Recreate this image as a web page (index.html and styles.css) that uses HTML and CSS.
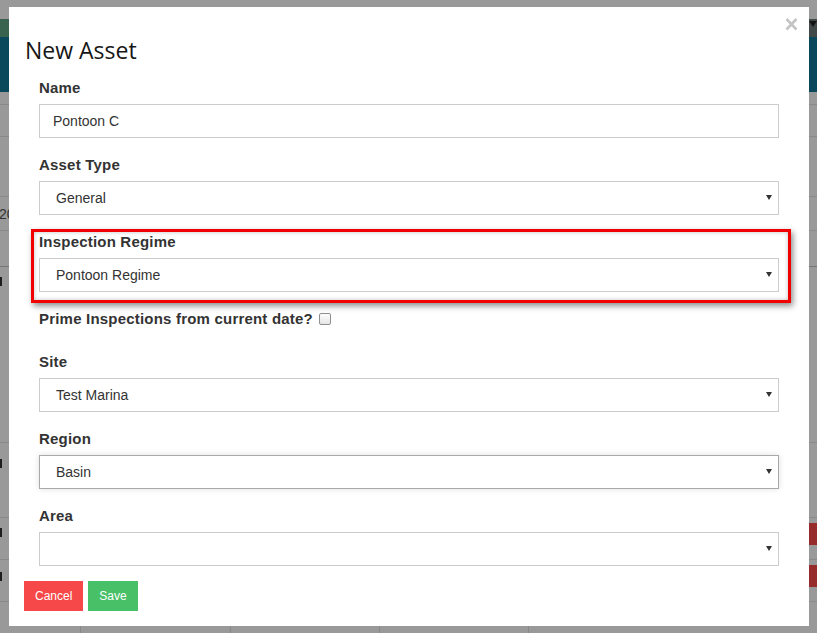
FILE: index.html
```html
<!DOCTYPE html>
<html>
<head>
<meta charset="utf-8">
<title>New Asset</title>
<link rel="stylesheet" href="styles.css">
</head>
<body>
<div class="page">
  <div class="topbar"><span class="brand"></span><span class="topfill"></span><span class="caret"></span></div>
  <div class="mainbar"></div>
  <div class="grid">
    <div class="row h13"><span class="cell c1"></span><span class="cell c2"></span><span class="cell c3"></span><span class="cell c4"></span><span class="cell c5"></span></div>
    <div class="row h32"><span class="cell c1"></span><span class="cell c2"></span><span class="cell c3"></span><span class="cell c4"></span><span class="cell c5"></span></div>
    <div class="row h60"><span class="cell c1"></span><span class="cell c2"></span><span class="cell c3"></span><span class="cell c4"></span><span class="cell c5"></span></div>
    <div class="row h34"><span class="cell c1"><span class="celltext">20</span></span><span class="cell c2"></span><span class="cell c3"></span><span class="cell c4"></span><span class="cell c5"></span></div>
    <div class="row h36 dark"><span class="cell c1"></span><span class="cell c2"></span><span class="cell c3"></span><span class="cell c4"></span><span class="cell c5"></span></div>
    <div class="row h176"><span class="cell c1 top"><span class="tick t1"></span></span><span class="cell c2"></span><span class="cell c3"></span><span class="cell c4"></span><span class="cell c5"></span></div>
    <div class="row h75"><span class="cell c1 top"><span class="tick t2"></span></span><span class="cell c2"></span><span class="cell c3"></span><span class="cell c4"></span><span class="cell c5"></span></div>
    <div class="row h42"><span class="cell c1 top"><span class="tick t3"></span></span><span class="cell c2"></span><span class="cell c3"></span><span class="cell c4"></span><span class="cell c5 end"><span class="redbtn"></span></span></div>
    <div class="row h42"><span class="cell c1 top"><span class="tick t4"></span></span><span class="cell c2"></span><span class="cell c3"></span><span class="cell c4"></span><span class="cell c5 end"><span class="redbtn"></span></span></div>
    <div class="row h60"><span class="cell c1"></span><span class="cell c2"></span><span class="cell c3"></span><span class="cell c4"></span><span class="cell c5"></span></div>
  </div>
</div>

<div class="backdrop">
  <div class="modal">
    <button class="close" type="button" aria-label="Close">
      <svg width="13" height="14" viewBox="0 0 13 14"><path d="M1.5 2 L11.5 12.5 M11.5 2 L1.5 12.5" stroke="#c4c4c4" stroke-width="2.6" fill="none"/></svg>
    </button>
    <h4 class="modal-title">New Asset</h4>
    <form class="modal-body">
      <div class="form-group">
        <label class="control-label">Name</label>
        <input class="form-control" type="text" value="Pontoon C">
      </div>
      <div class="form-group">
        <label class="control-label">Asset Type</label>
        <div class="select-wrap">
          <select class="form-control select"><option>General</option></select>
        </div>
      </div>
      <div class="form-group highlighted">
        <label class="control-label">Inspection Regime</label>
        <div class="select-wrap">
          <select class="form-control select"><option>Pontoon Regime</option></select>
        </div>
        <span class="annotation"></span>
      </div>
      <div class="form-group check-group">
        <label class="control-label">Prime Inspections from current date? <input class="checkbox" type="checkbox"></label>
      </div>
      <div class="form-group">
        <label class="control-label">Site</label>
        <div class="select-wrap">
          <select class="form-control select"><option>Test Marina</option></select>
        </div>
      </div>
      <div class="form-group">
        <label class="control-label">Region</label>
        <div class="select-wrap">
          <select class="form-control select focused"><option>Basin</option></select>
        </div>
      </div>
      <div class="form-group last">
        <label class="control-label">Area</label>
        <div class="select-wrap">
          <select class="form-control select"><option></option></select>
        </div>
      </div>
    </form>
    <div class="modal-footer">
      <button class="btn btn-cancel" type="button">Cancel</button>
      <button class="btn btn-save" type="button">Save</button>
    </div>
  </div>
</div>
</body>
</html>
```

FILE: styles.css
```css
* { box-sizing: border-box; }

html, body {
  margin: 0;
  padding: 0;
  height: 100%;
  overflow: hidden;
  background: #fff;
  font-family: "Liberation Sans", Arial, sans-serif;
}

/* ---------- background page (under the backdrop) ---------- */
.page {
  padding-top: 19px;
}
.topbar {
  display: flex;
  height: 18px;
  align-items: center;
}
.brand {
  width: 60px;
  height: 18px;
  background: #5fa584;
}
.topfill {
  flex: 1;
  height: 18px;
  background: linear-gradient(90deg, #5fa584 0%, #5fa584 85%, #6f7a7a 100%);
}
.caret {
  position: absolute;
  right: 0;
  top: 21px;
  width: 0;
  height: 0;
  border-left: 4px solid transparent;
  border-right: 4px solid transparent;
  border-top: 6px solid #222;
}
.mainbar {
  height: 55px;
  background: #127a9a;
}
.grid {
  display: flex;
  flex-direction: column;
}
.row {
  display: flex;
  border-bottom: 1px solid #e4e4e4;
}
.row.dark { border-bottom-color: #c4c4c4; }
.h13 { height: 13px; }
.h32 { height: 32px; }
.h34 { height: 34px; }
.h36 { height: 36px; }
.h42 { height: 42px; }
.h60 { height: 60px; }
.h75 { height: 75px; }
.h176 { height: 176px; }
.cell {
  display: flex;
  align-items: center;
  border-right: 1px solid #e4e4e4;
  overflow: hidden;
}
.cell.top { align-items: flex-start; }
.c1 { width: 81px; }
.c2 { width: 150px; }
.c3 { width: 149px; }
.c4 { width: 149px; }
.c5 { flex: 1; border-right: 0; }
.cell.end { justify-content: flex-end; align-items: flex-start; padding-top: 5px; }
.celltext {
  margin-left: -1px;
  font-size: 14px;
  color: #555;
  white-space: nowrap;
}
.tick {
  display: block;
  width: 2px;
  height: 9px;
  background: #333;
}
.t1 { margin-top: 10px; }
.t2 { margin-top: 16px; }
.t3 { margin-top: 10px; }
.t4 { margin-top: 12px; }
.redbtn {
  display: block;
  width: 60px;
  height: 22px;
  background: #f84848;
}

/* ---------- backdrop + modal ---------- */
.backdrop {
  position: fixed;
  inset: 0;
  background: rgba(0, 0, 0, 0.4);
  padding: 7px 8px 0 9px;
}
.modal {
  position: relative;
  background: #fff;
}
.close {
  position: absolute;
  top: 10px;
  right: 11px;
  padding: 0;
  margin: 0;
  border: 0;
  background: transparent;
  line-height: 0;
  cursor: pointer;
}
.modal-title {
  margin: 0;
  padding: 28px 0 0 16px;
  font-family: "Open Sans", sans-serif;
  font-weight: 400;
  font-size: 23px;
  line-height: 30px;
  color: #161616;
}
.modal-body {
  margin: 0;
  padding: 13px 30px 0 30px;
}
.form-group {
  margin-bottom: 17px;
}
.form-group.check-group { margin-bottom: 23px; }
.form-group.last { margin-bottom: 0; }
.highlighted { position: relative; }
.control-label {
  display: block;
  margin-bottom: 6px;
  font-size: 15px;
  font-weight: 700;
  line-height: 20px;
  letter-spacing: 0.2px;
  color: #333;
}
.form-control {
  display: block;
  width: 100%;
  height: 34px;
  margin: 0;
  padding: 0 13px;
  border: 1px solid #ccc;
  border-radius: 0;
  background: #fff;
  font-family: "Liberation Sans", Arial, sans-serif;
  font-size: 14px;
  color: #333;
  outline: none;
}
.select-wrap {
  position: relative;
}
.select-wrap::after {
  content: "";
  position: absolute;
  right: 7px;
  top: 14px;
  width: 0;
  height: 0;
  border-left: 3.5px solid transparent;
  border-right: 3.5px solid transparent;
  border-top: 5px solid #333;
  pointer-events: none;
}
.select {
  -webkit-appearance: none;
  appearance: none;
  padding-left: 16px;
}
.select.focused {
  border-color: #a9a9a9;
  box-shadow: 0 0 6px rgba(0, 0, 0, 0.13);
}
.annotation {
  position: absolute;
  left: -8px;
  top: -3px;
  width: 760px;
  height: 74px;
  border: 3px solid #f00000;
  box-shadow: 2px 3px 6px rgba(0, 0, 0, 0.45), inset 0 0 4px rgba(0, 0, 0, 0.25);
  pointer-events: none;
}
.checkbox {
  -webkit-appearance: none;
  appearance: none;
  display: inline-block;
  width: 12px;
  height: 12px;
  margin: 0 0 0 2px;
  vertical-align: -1px;
  border: 1px solid #8f8f8f;
  border-radius: 2px;
  background: linear-gradient(#fdfdfd, #e6e6e6);
}
.modal-footer {
  display: flex;
  gap: 5px;
  padding: 15px;
}
.btn {
  margin: 0;
  padding: 5px 10px;
  border: 1px solid transparent;
  border-radius: 0;
  font-family: "Liberation Sans", Arial, sans-serif;
  font-size: 12px;
  line-height: 18px;
  color: #fff;
  cursor: pointer;
}
.btn-cancel { background: #f64848; border-color: #f64848; }
.btn-save { background: #47c068; border-color: #47c068; }
```
